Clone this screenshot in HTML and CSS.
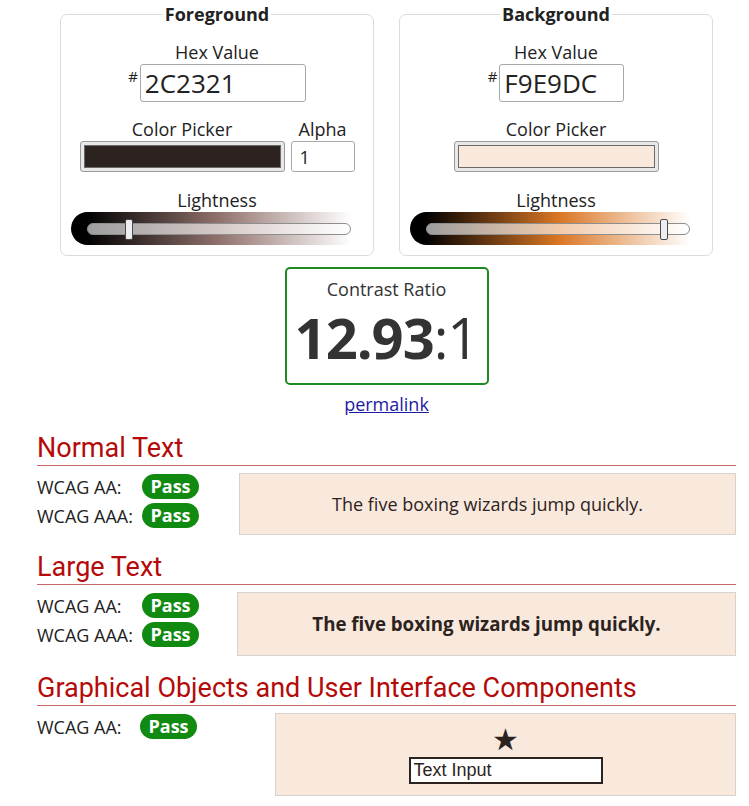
FILE: index.html
```html
<!DOCTYPE html>
<html lang="en">
<head>
<meta charset="utf-8">
<title>Contrast Checker</title>
<link rel="stylesheet" href="styles.css">
</head>
<body>
<main class="page">
  <div class="pickers">
    <fieldset class="color-set">
      <legend>Foreground</legend>
      <div class="field">
        <span class="lbl">Hex Value</span>
        <div class="hex-row"><span class="hash">#</span><input class="hex-input hex-fg" value="2C2321"></div>
      </div>
      <div class="picker-row">
        <div class="field">
          <span class="lbl">Color Picker</span>
          <div class="swatch"><div class="swatch-fill fill-fg"></div></div>
        </div>
        <div class="field">
          <span class="lbl">Alpha</span>
          <input class="alpha" value="1">
        </div>
      </div>
      <div class="field">
        <span class="lbl">Lightness</span>
        <div class="slider slider-fg"><div class="track"><div class="thumb" style="left:15.6%"></div></div></div>
      </div>
    </fieldset>
    <fieldset class="color-set">
      <legend>Background</legend>
      <div class="field">
        <span class="lbl">Hex Value</span>
        <div class="hex-row"><span class="hash">#</span><input class="hex-input hex-bg" value="F9E9DC"></div>
      </div>
      <div class="picker-row">
        <div class="field">
          <span class="lbl">Color Picker</span>
          <div class="swatch"><div class="swatch-fill fill-bg"></div></div>
        </div>
      </div>
      <div class="field">
        <span class="lbl">Lightness</span>
        <div class="slider slider-bg"><div class="track"><div class="thumb" style="left:90.6%"></div></div></div>
      </div>
    </fieldset>
  </div>

  <div class="ratio-box">
    <div class="ratio-label">Contrast Ratio</div>
    <div class="ratio-value"><b>12.93</b>:1</div>
  </div>
  <div class="permalink-row"><a class="permalink" href="#">permalink</a></div>

  <section class="result">
    <h2>Normal Text</h2>
    <div class="result-row cols-normal">
      <div class="checks">
        <div class="check"><span class="check-lbl">WCAG AA:</span><span class="pass">Pass</span></div>
        <div class="check"><span class="check-lbl">WCAG AAA:</span><span class="pass">Pass</span></div>
      </div>
      <div class="sample sample-normal">The five boxing wizards jump quickly.</div>
    </div>
  </section>

  <section class="result">
    <h2>Large Text</h2>
    <div class="result-row cols-large">
      <div class="checks">
        <div class="check"><span class="check-lbl">WCAG AA:</span><span class="pass">Pass</span></div>
        <div class="check"><span class="check-lbl">WCAG AAA:</span><span class="pass">Pass</span></div>
      </div>
      <div class="sample sample-large">The five boxing wizards jump quickly.</div>
    </div>
  </section>

  <section class="result">
    <h2>Graphical Objects and User Interface Components</h2>
    <div class="result-row cols-graphic">
      <div class="checks">
        <div class="check"><span class="check-lbl lbl-short">WCAG AA:</span><span class="pass">Pass</span></div>
      </div>
      <div class="sample sample-graphic">
        <span class="star">★</span>
        <input class="text-input" value="Text Input">
      </div>
    </div>
  </section>
</main>
</body>
</html>
```

FILE: styles.css
```css
* { box-sizing: border-box; }

html, body {
  margin: 0;
  background: #fff;
}

body {
  font-family: "Open Sans", "DejaVu Sans", sans-serif;
  font-size: 18px;
  line-height: 24px;
  color: #222;
}

.page {
  width: 699px;
  margin-left: 37px;
  padding-top: 3px;
}

/* ---------- pickers ---------- */
.pickers {
  display: flex;
  justify-content: center;
  gap: 25px;
}

.color-set {
  width: 314px;
  margin: 0;
  padding: 14px 8px 10px;
  border: 1px solid #dcdcdc;
  border-radius: 7px;
  display: flex;
  flex-direction: column;
  align-items: center;
}

.color-set legend {
  margin: 0 auto;
  padding: 0 2px;
  font-weight: 700;
  font-size: 18px;
  line-height: 23px;
  color: #222;
}

.field {
  display: flex;
  flex-direction: column;
  align-items: center;
}

.lbl {
  display: block;
  line-height: 24px;
  color: #222;
}

.hex-row {
  display: flex;
  align-items: flex-start;
}

.hash {
  font-size: 15px;
  line-height: 15px;
  margin-top: 5px;
  margin-right: 2px;
}

.hex-input {
  height: 38px;
  margin: 0;
  padding: 0 4px;
  border: 1px solid #a8a8a8;
  border-radius: 3px;
  font-family: "Open Sans", sans-serif;
  font-size: 26px;
  color: #222;
  background: #fff;
}

.hex-fg { width: 166px; }
.hex-bg { width: 125px; }

.picker-row {
  display: flex;
  gap: 6px;
  margin-top: 15px;
  align-items: flex-end;
}

.swatch {
  width: 205px;
  height: 31px;
  padding: 3px;
  border: 1px solid #9a9a9a;
  border-radius: 3px;
  background: #e8e8e8;
}

.swatch-fill {
  height: 100%;
  border: 1px solid #6a6a6a;
}

.fill-fg { background: #2C2321; }
.fill-bg { background: #F9E9DC; }

.alpha {
  width: 64px;
  height: 31px;
  margin: 0;
  padding: 0 8px;
  border: 1px solid #a8a8a8;
  border-radius: 3px;
  font-family: "Open Sans", sans-serif;
  font-size: 18px;
  color: #222;
  background: #fff;
}

.picker-row + .field {
  margin-top: 16px;
}

.slider {
  width: 292px;
  height: 33px;
  border-radius: 17px 0 0 17px;
  padding: 11px 12px 0 16px;
}

.slider-fg {
  background: linear-gradient(to right,
    hsl(8, 14%, 0%) 5%,
    hsl(8, 14%, 25%) 28%,
    hsl(8, 14%, 50%) 51%,
    hsl(8, 14%, 75%) 73%,
    hsl(8, 14%, 100%) 96%);
}

.slider-bg {
  background: linear-gradient(to right,
    hsl(27, 71%, 0%) 5%,
    hsl(27, 71%, 25%) 28%,
    hsl(27, 71%, 50%) 51%,
    hsl(27, 71%, 75%) 73%,
    hsl(27, 71%, 100%) 96%);
}

.track {
  position: relative;
  height: 12px;
  border: 1px solid #8e8e8e;
  border-radius: 6px;
  background: rgba(255, 255, 255, 0.62);
}

.thumb {
  position: absolute;
  top: -5px;
  width: 8px;
  height: 21px;
  margin-left: -4px;
  border: 1px solid #4a4a4a;
  border-radius: 2px;
  background: #eceef2;
}

/* ---------- ratio ---------- */
.ratio-box {
  width: 204px;
  height: 118px;
  margin: 11px auto 0;
  padding-top: 10px;
  border: 2px solid #1f8a1f;
  border-radius: 5px;
  text-align: center;
  color: #333;
}

.ratio-label {
  line-height: 20px;
}

.ratio-value {
  font-size: 56px;
  line-height: 76px;
  letter-spacing: -1px;
  color: #333;
}

.ratio-value b { font-weight: 700; }

.permalink-row {
  text-align: center;
  margin-top: 7px;
}

.permalink {
  color: #1d1ba3;
  text-decoration: underline;
}

/* ---------- results ---------- */
.result h2 {
  margin: 17px 0 0;
  padding-bottom: 1px;
  border-bottom: 1px solid #c76666;
  font-family: Roboto, "Liberation Sans", sans-serif;
  font-weight: 400;
  font-size: 27px;
  line-height: 31px;
  color: #b40a0a;
}

.result-row {
  display: grid;
  align-items: start;
  margin-top: 7px;
}

.cols-normal { grid-template-columns: 202px 1fr; }
.cols-large { grid-template-columns: 200px 1fr; }
.cols-graphic { grid-template-columns: 238px 1fr; }

.checks {
  display: flex;
  flex-direction: column;
  gap: 4px;
  padding-top: 1px;
}

.check {
  display: flex;
  align-items: center;
  height: 25px;
}

.check-lbl {
  width: 105px;
}

.lbl-short { width: 103px; }

.pass {
  display: inline-block;
  width: 57px;
  height: 25px;
  border-radius: 13px;
  background: #118a11;
  color: #fff;
  font-weight: 700;
  line-height: 25px;
  text-align: center;
}

.sample {
  border: 1px solid #d6d2cf;
  background: #F9E9DC;
  color: #2C2321;
  text-align: center;
}

.sample-normal {
  height: 62px;
  line-height: 60px;
}

.sample-large {
  height: 64px;
  line-height: 62px;
  font-weight: 700;
  font-size: 18.7px;
}

.sample-graphic {
  height: 83px;
  display: flex;
  flex-direction: column;
  align-items: center;
  padding-top: 9px;
}

.star {
  font-family: "DejaVu Sans", sans-serif;
  font-size: 30px;
  line-height: 34px;
  color: #2C2321;
}

.text-input {
  width: 194px;
  height: 27px;
  margin: 0;
  padding: 0 3px;
  border: 2px solid #2C2321;
  border-radius: 0;
  background: #fff;
  font-family: "Liberation Sans", Arial, sans-serif;
  font-size: 18px;
  color: #2C2321;
}
```
